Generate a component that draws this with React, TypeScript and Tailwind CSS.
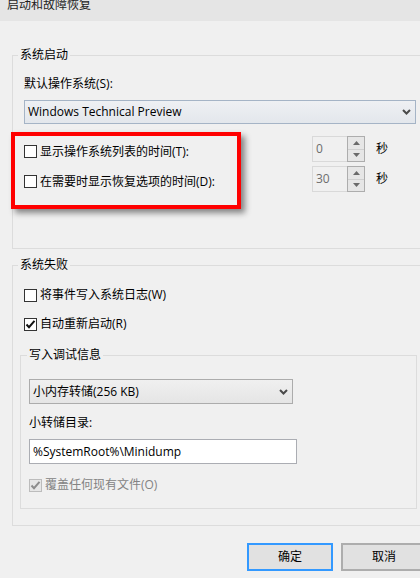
import React from "react"

function Checkbox({ checked = false, disabled = false }: { checked?: boolean; disabled?: boolean }) {
  return (
    <span
      className={
        disabled
          ? "flex h-[13px] w-[13px] shrink-0 items-center justify-center border border-[#bcbcbc] bg-[#e6e6e6]"
          : "flex h-[13px] w-[13px] shrink-0 items-center justify-center border border-[#333333] bg-white"
      }
    >
      {checked && (
        <svg width="11" height="11" viewBox="0 0 11 11">
          <path
            d="M1.5 5.5 L4 8.2 L9.5 1.8"
            fill="none"
            stroke={disabled ? "#8c8c8c" : "#111111"}
            strokeWidth="2"
          />
        </svg>
      )}
    </span>
  )
}

function Chevron() {
  return (
    <svg width="9" height="6" viewBox="0 0 9 6">
      <path d="M1 1 L4.5 4.5 L8 1" fill="none" stroke="#4a4a4a" strokeWidth="2" />
    </svg>
  )
}

function Spinner({ value }: { value: string }) {
  return (
    <div className="flex h-[26px] w-[53px]">
      <div className="flex flex-1 items-center border border-r-0 border-[#d9d9d9] bg-[#f0f0f0] pl-[3px] text-[#6d6d6d]">
        {value}
      </div>
      <div className="flex w-[18px] flex-col border border-[#adadad] bg-[#e6e6e6]">
        <div className="flex flex-1 items-center justify-center border-b border-[#d0d0d0]">
          <svg width="7" height="4" viewBox="0 0 7 4">
            <path d="M0 4 L3.5 0 L7 4 Z" fill="#6a6a6a" />
          </svg>
        </div>
        <div className="flex flex-1 items-center justify-center">
          <svg width="7" height="4" viewBox="0 0 7 4">
            <path d="M0 0 L3.5 4 L7 0 Z" fill="#6a6a6a" />
          </svg>
        </div>
      </div>
    </div>
  )
}

function TimeRow({ label, value }: { label: string; value: string }) {
  return (
    <div className="flex h-[26px] items-center">
      <div className="mt-[5px] flex w-[288px] items-center">
        <Checkbox />
        <span className="ml-[3px]">{label}</span>
      </div>
      <Spinner value={value} />
      <span className="ml-[11px]">秒</span>
    </div>
  )
}

export default function App() {
  return (
    <div className="relative flex h-[578px] w-[420px] flex-col overflow-hidden bg-[#f0f0f0] font-['Open_Sans','Noto_Sans_CJK_SC',sans-serif] text-[12px] leading-[16px] text-black">
      <div className="h-[21px] shrink-0 bg-[#e5e5e5] pl-[7px]">
        <div className="-mt-[3px] text-[#1e1e1e]">启动和故障恢复</div>
      </div>

      <fieldset className="ml-[12px] mt-[26px] w-[430px] shrink-0 border border-[#dcdcdc] pb-[56px] pl-[11px]">
        <legend className="-ml-[6px] px-[2px]">系统启动</legend>
        <div className="mt-[13px]">默认操作系统(S):</div>
        <div className="mt-[8px] flex h-[24px] w-[392px] items-center justify-between border border-[#a5b4c6] bg-gradient-to-b from-[#eef0f3] to-[#e3e7ec] pl-[3px] pr-[4px]">
          <span>Windows Technical Preview</span>
          <Chevron />
        </div>
        <div className="mt-[12px] flex flex-col gap-[4px]">
          <TimeRow label="显示操作系统列表的时间(T):" value="0" />
          <TimeRow label="在需要时显示恢复选项的时间(D):" value="30" />
        </div>
      </fieldset>

      <fieldset className="ml-[12px] mt-[8px] w-[430px] shrink-0 border border-[#dcdcdc] pb-[16px] pl-[7px]">
        <legend className="-ml-[2px] px-[2px]">系统失败</legend>
        <div className="ml-[4px] mt-[14px] flex h-[16px] items-center">
          <Checkbox />
          <span className="ml-[3px]">将事件写入系统日志(W)</span>
        </div>
        <div className="ml-[4px] mt-[13px] flex h-[16px] items-center">
          <Checkbox checked />
          <span className="ml-[3px]">自动重新启动(R)</span>
        </div>

        <fieldset className="mt-[15px] w-[397px] border border-[#dcdcdc] pb-[15px] pl-[8px]">
          <legend className="-ml-[2px] px-[2px]">写入调试信息</legend>
          <div className="mt-[16px] flex h-[25px] w-[264px] items-center justify-between border border-[#acacac] bg-gradient-to-b from-[#f0f0f0] to-[#e5e5e5] pl-[3px] pr-[4px]">
            <span>小内存转储(256 KB)</span>
            <Chevron />
          </div>
          <div className="mt-[11px]">小转储目录:</div>
          <div className="mt-[8px] flex h-[25px] w-[268px] items-center border border-[#abadb3] bg-white pl-[3px]">
            %SystemRoot%\Minidump
          </div>
          <div className="mt-[13px] flex h-[16px] items-center">
            <Checkbox checked disabled />
            <span className="ml-[3px] text-[#838383]">覆盖任何现有文件(O)</span>
          </div>
        </fieldset>
      </fieldset>

      <div className="ml-[247px] mt-[17px] flex shrink-0 gap-[8px]">
        <div className="flex h-[28px] w-[86px] shrink-0 items-center justify-center border-2 border-[#3399ff] bg-[#e1e1e1]">
          确定
        </div>
        <div className="flex h-[28px] w-[86px] shrink-0 items-center justify-center border-2 border-[#adadad] bg-[#e1e1e1]">
          取消
        </div>
      </div>

      <div className="pointer-events-none absolute left-[11px] top-[132px] h-[77px] w-[230px] border-4 border-[#ff0000] shadow-[4px_4px_6px_rgba(0,0,0,0.45)]" />
    </div>
  )
}
